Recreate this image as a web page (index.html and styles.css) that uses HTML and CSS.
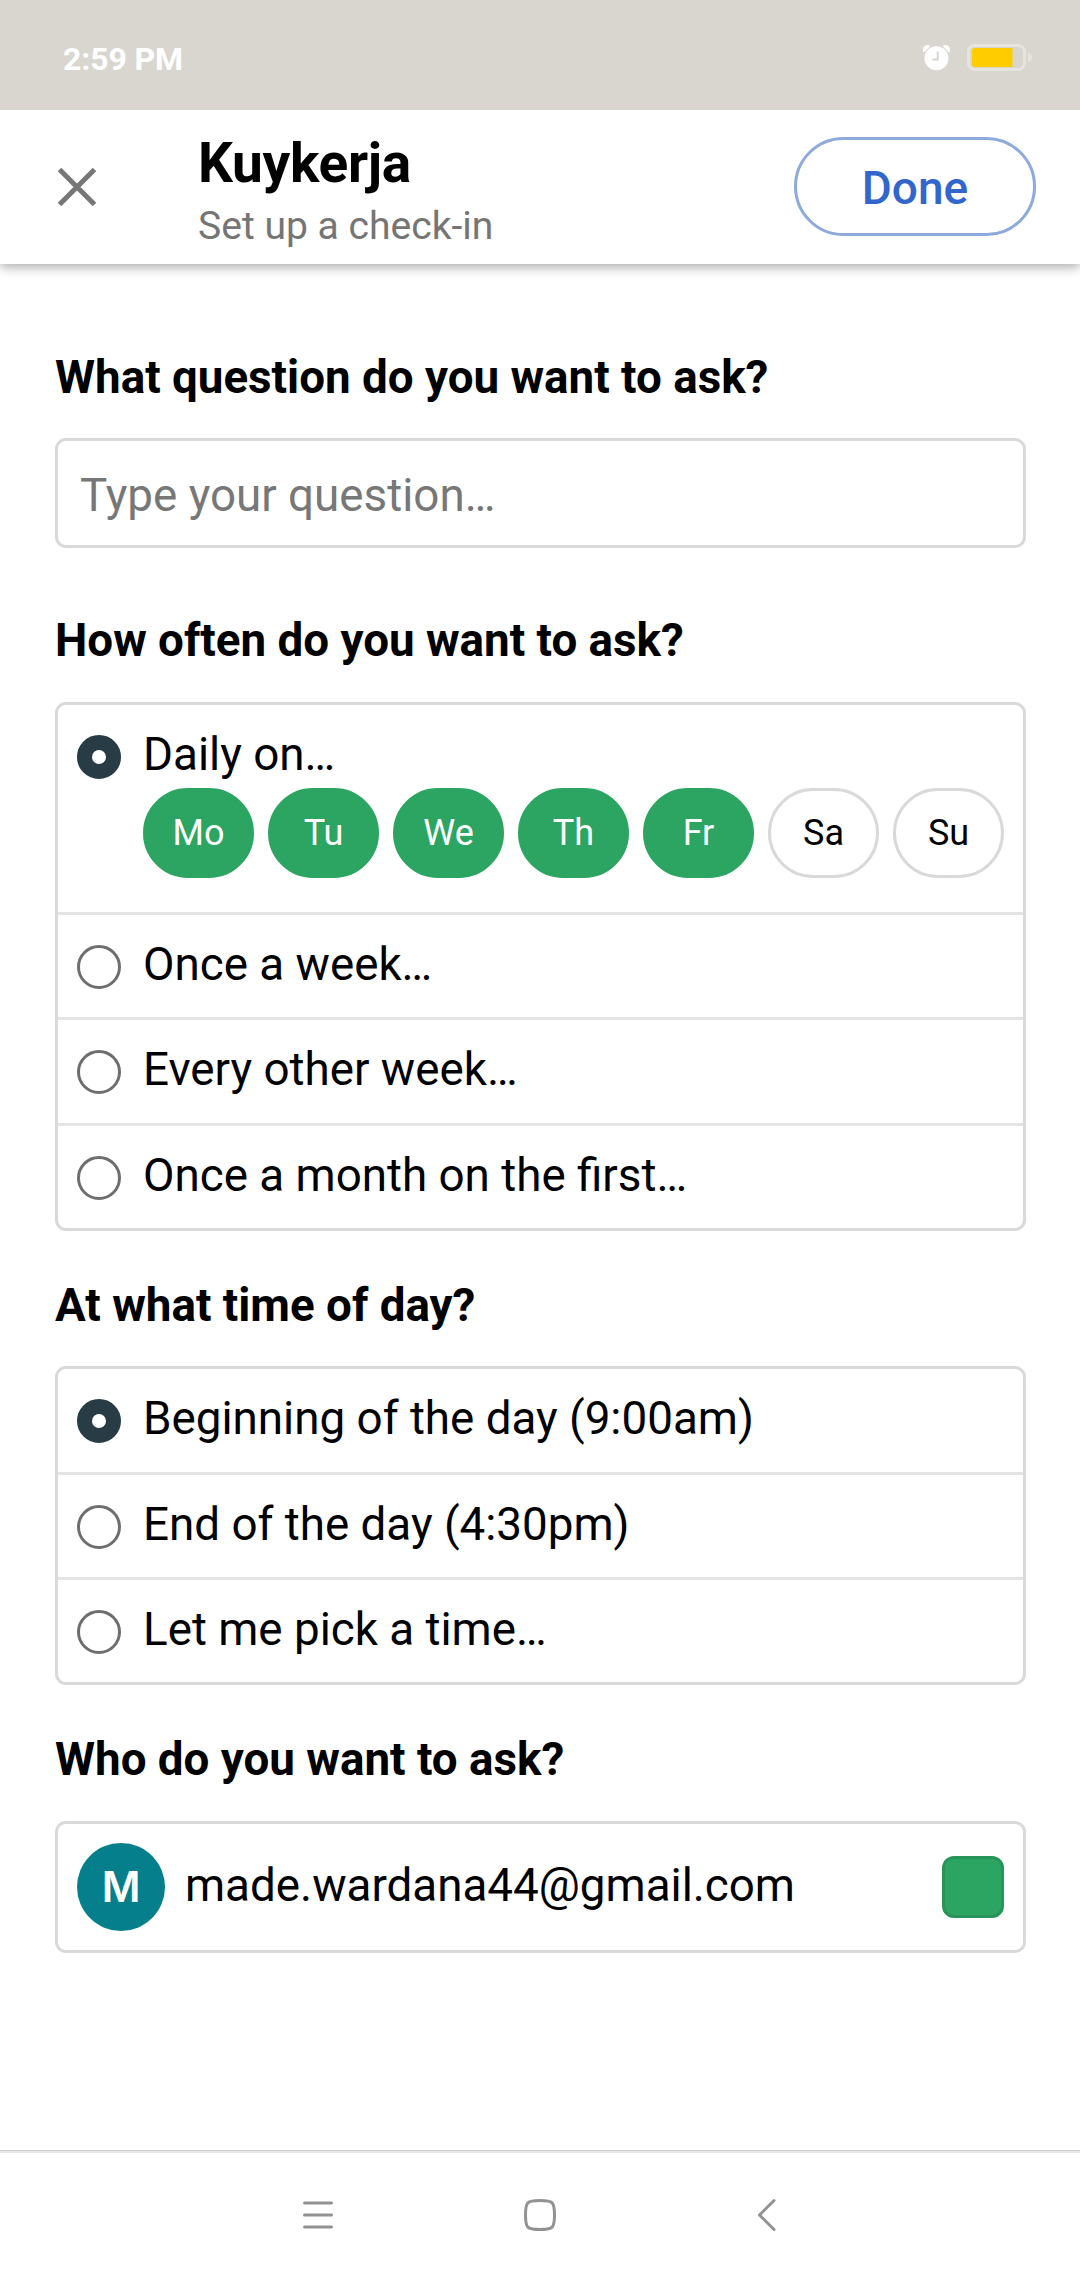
FILE: index.html
```html
<!DOCTYPE html>
<html lang="en">
<head>
<meta charset="utf-8">
<title>Set up a check-in</title>
<link rel="stylesheet" href="styles.css">
</head>
<body>
<div class="screen">
  <div class="status">
    <span class="clock">2:59 PM</span>
    <svg class="status-icons" width="112" height="30" viewBox="0 0 112 30">
      <circle cx="15.5" cy="16.3" r="12" fill="#fff"/>
      <path d="M2 10.5V7.5A5 5 0 0 1 7 3H8.5V5.2A15 15 0 0 0 4 9.7ZM29 10.5V7.5A5 5 0 0 0 24 3H22.500V5.200A15 15 0 0 1 27 9.700Z" fill="#fff"/>
      <path d="M16.700 9.500V17.400H11.500" fill="none" stroke="#d9d6cf" stroke-width="2"/>
      <rect x="47.500" y="3.500" width="56" height="24" rx="6" fill="none" stroke="#e6e4df" stroke-width="3"/>
      <path d="M53.500 6H91.500V25H53.500A2.500 2.500 0 0 1 51 22.500V8.500A2.500 2.500 0 0 1 53.500 6Z" fill="#ffcc00"/>
      <path d="M107 10.500Q111 12 111 15.500Q111 19 107 20.500Z" fill="#e6e4df"/>
    </svg>
  </div>
  <header class="header">
    <svg class="close" width="40" height="40" viewBox="0 0 40 40"><path d="M2.500 2.500L37.500 37.500M37.500 2.500L2.500 37.500" fill="none" stroke="#777" stroke-width="5"/></svg>
    <div class="titles">
      <h1 class="title">Kuykerja</h1>
      <div class="subtitle">Set up a check-in</div>
    </div>
    <button class="done">Done</button>
  </header>
  <main class="form">
    <h2 class="question">What question do you want to ask?</h2>
    <div class="box input">Type your question…</div>

    <h2 class="question after-input">How often do you want to ask?</h2>
    <div class="box">
      <div class="row daily">
        <span class="radio on"></span>
        <div class="option">
          <div>Daily on…</div>
          <div class="days">
            <span class="day picked">Mo</span><span class="day picked">Tu</span><span class="day picked">We</span><span class="day picked">Th</span><span class="day picked">Fr</span><span class="day">Sa</span><span class="day">Su</span>
          </div>
        </div>
      </div>
      <div class="row"><span class="radio"></span><div class="option">Once a week…</div></div>
      <div class="row"><span class="radio"></span><div class="option">Every other week…</div></div>
      <div class="row"><span class="radio"></span><div class="option">Once a month on the first…</div></div>
    </div>

    <h2 class="question">At what time of day?</h2>
    <div class="box times">
      <div class="row"><span class="radio on"></span><div class="option">Beginning of the day (9:00am)</div></div>
      <div class="row"><span class="radio"></span><div class="option">End of the day (4:30pm)</div></div>
      <div class="row"><span class="radio"></span><div class="option">Let me pick a time…</div></div>
    </div>

    <h2 class="question who">Who do you want to ask?</h2>
    <div class="box person">
      <span class="avatar">M</span>
      <span class="email">made.wardana44@gmail.com</span>
      <span class="check"></span>
    </div>
  </main>
  <nav class="nav">
    <svg width="32" height="36" viewBox="0 0 32 36"><path d="M2.500 6H29.500M2.500 18H29.500M2.500 30H29.500" stroke="#929292" stroke-width="3" stroke-linecap="round"/></svg>
    <svg class="home" width="36" height="36" viewBox="0 0 36 36"><path d="M18 3.500C31 3.500 32.500 5 32.500 18S31 32.500 18 32.500S3.500 31 3.500 18S5 3.500 18 3.500Z" fill="none" stroke="#929292" stroke-width="3"/></svg>
    <svg width="24" height="36" viewBox="0 0 24 36"><path d="M19 3.500L4.500 18L19 32.500" fill="none" stroke="#929292" stroke-width="3" stroke-linecap="round" stroke-linejoin="round"/></svg>
  </nav>
</div>
</body>
</html>
```
FILE: styles.css
```css
* { box-sizing: border-box; }
body { margin: 0; background: #fff; color: #000; font-family: Roboto, "Noto Sans", sans-serif; }
h1, h2 { margin: 0; }
svg { display: block; flex: none; }

.screen { display: flex; flex-direction: column; width: 1080px; height: 2280px; }

.status { display: flex; justify-content: space-between; align-items: flex-start; height: 110px; padding: 42px 47px 0 63px; background: #d9d6cf; }
.clock { font-size: 32px; font-weight: 700; line-height: 34px; letter-spacing: -0.1px; color: #fff; }

.header { display: flex; align-items: flex-start; height: 154px; padding: 0 44px 0 57px; background: #fff; box-shadow: 0 3px 11px rgba(0, 0, 0, .34); clip-path: inset(0 0 -18px 0); }
.close { margin-top: 57px; }
.titles { flex: 1; margin-left: 101px; padding-top: 21px; }
.title { font-size: 55px; font-weight: 700; line-height: 64px; letter-spacing: -0.3px; }
.subtitle { font-size: 39.1px; line-height: 46px; color: #757575; margin-top: 8px; }
.done { width: 242px; height: 99px; margin-top: 27px; padding: 2px 0 0; border: 3px solid #8ea9dc; border-radius: 50px; background: none; font: 500 46px Roboto, sans-serif; color: #3366cc; }

.form { flex: 1; padding: 88px 54px 0 55px; font-size: 45.75px; line-height: 52px; }
.question { font-size: 45.75px; font-weight: 700; line-height: 52px; margin: 49px 0 34px; }
.question:first-child { margin-top: 0; }
.question.after-input { margin: 67px 0 35px; }
.question.who { margin-bottom: 35px; }
.box { border: 3px solid #d9d9d9; border-radius: 11px; }
.input { height: 110px; padding: 29px 22px 0; color: #777; }

.row { display: flex; gap: 22px; height: 105.33px; padding: 24px 19px 0; border-bottom: 3px solid #e4e4e4; }
.times .row { height: 105px; }
.times .row:first-child { height: 106px; }
.box .row:last-child { height: 102px; border-bottom: 0; }
.row.daily { height: 210px; }
.radio { flex: none; width: 44px; height: 44px; margin-top: 6px; border: 3px solid #6e6e6e; border-radius: 50%; }
.radio.on { border: 15px solid #283c46; }
.option { white-space: nowrap; }
.days { display: flex; gap: 14px; margin-top: 7px; }
.day { width: 111px; height: 90px; border: 3px solid #d9d9d9; border-radius: 45px; font-size: 36px; line-height: 84px; text-align: center; }
.day.picked { border-color: #2da562; background: #2da562; color: #fff; }

.person { display: flex; align-items: center; height: 132px; padding: 0 19px; }
.avatar { width: 88px; height: 88px; border-radius: 50%; background: #047f8b; color: #fff; font: 600 42px/88px Inter, sans-serif; text-align: center; }
.email { flex: 1; margin-left: 20px; padding-bottom: 2px; }
.check { width: 62px; height: 62px; border: 3px solid #279559; border-radius: 12px; background: #2da562; }

.nav { display: flex; align-items: flex-start; justify-content: space-between; height: 130px; padding: 46px 301px 0 302px; border-top: 1px solid #cdcfcd; box-shadow: inset 0 2px #e6e6e6; }
.home { margin-right: 10px; }
```
